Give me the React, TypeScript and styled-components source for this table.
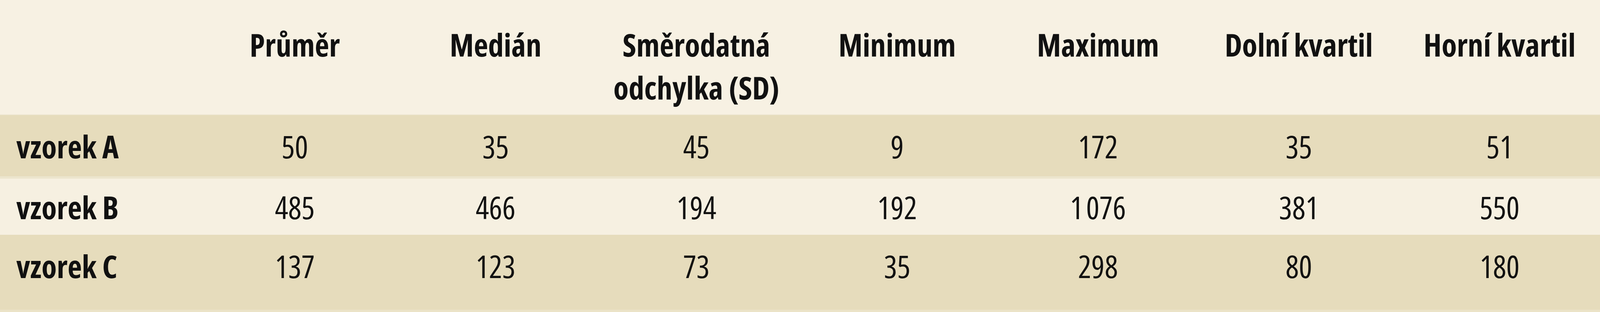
import React from 'react';
import styled, { createGlobalStyle } from 'styled-components';

const GlobalStyle = createGlobalStyle`
  html, body {
    margin: 0;
    padding: 0;
    background: #f7f1e3;
  }
  body {
    font-family: "Open Sans", "Noto Sans", sans-serif;
    color: #111;
  }
`;

const Table = styled.div`
  width: 100%;
  display: flex;
  flex-direction: column;
`;

// label column is ~12.15% of the width, the seven data columns share the rest
const Row = styled.div<{ $bg: string; $pt: number; $pb: number; $border: string; $bw: number }>`
  display: grid;
  grid-template-columns: 12.15% repeat(7, 1fr);
  align-items: start;
  background: ${p => p.$bg};
  padding: ${p => p.$pt}px 0 ${p => p.$pb}px;
  border-bottom: ${p => p.$bw}px solid ${p => p.$border};
`;

const Cell = styled.div<{ $bold?: boolean; $label?: boolean }>`
  font-size: 80px;
  line-height: 110px;
  font-stretch: 80%;
  font-weight: ${p => (p.$bold ? 700 : 400)};
  text-align: ${p => (p.$label ? 'left' : 'center')};
  padding-left: ${p => (p.$label ? '8.4%' : '0')};
  white-space: nowrap;
`;

const headers: React.ReactNode[] = [
  'Průměr',
  'Medián',
  <>Směrodatná<br />odchylka (SD)</>,
  'Minimum',
  'Maximum',
  'Dolní kvartil',
  'Horní kvartil',
];

const rows = [
  { label: 'vzorek A', values: ['50', '35', '45', '9', '172', '35', '51'], bg: '#e6dcbc', pt: 25, pb: 22, border: '#ece5cd', bw: 6 },
  { label: 'vzorek B', values: ['485', '466', '194', '192', '1\u202F076', '381', '550'], bg: '#f6f0e1', pt: 18, pb: 16, border: '#f6f0e1', bw: 0 },
  { label: 'vzorek C', values: ['137', '123', '73', '35', '298', '80', '180'], bg: '#e6dcbc', pt: 25, pb: 57, border: '#ebe3c7', bw: 6 },
];

export default function App() {
  return (
    <>
      <GlobalStyle />
      <Table>
        <Row $bg="#f7f1e3" $pt={59} $pb={14} $border="#efe8d5" $bw={2}>
          <div />
          {headers.map((h, i) => (
            <Cell key={i} $bold>{h}</Cell>
          ))}
        </Row>
        {rows.map(r => (
          <Row key={r.label} $bg={r.bg} $pt={r.pt} $pb={r.pb} $border={r.border} $bw={r.bw}>
            <Cell $bold $label>{r.label}</Cell>
            {r.values.map((v, i) => (
              <Cell key={i}>{v}</Cell>
            ))}
          </Row>
        ))}
      </Table>
    </>
  );
}
